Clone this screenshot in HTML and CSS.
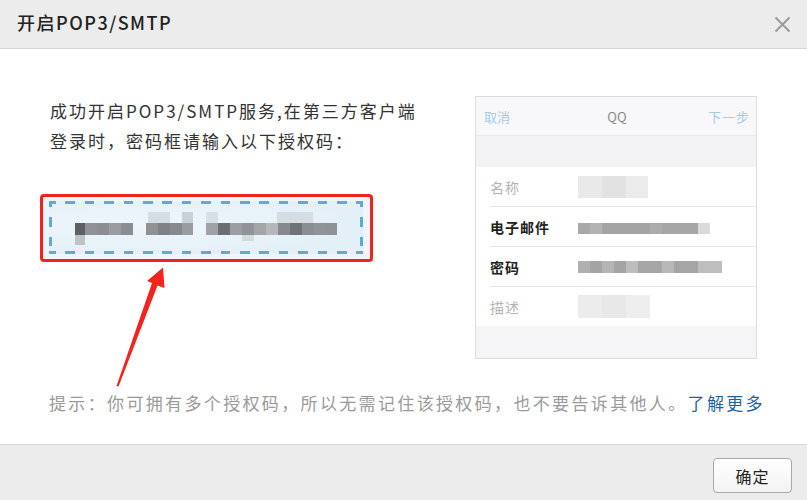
FILE: index.html
```html
<!DOCTYPE html>
<html lang="zh-CN">
<head>
<meta charset="utf-8">
<title>开启POP3/SMTP</title>
<link rel="stylesheet" href="styles.css">
</head>
<body>
<div class="dialog">
  <header class="hd">
    <h1 class="title">开启POP3/SMTP</h1>
    <span class="close" aria-label="关闭">
      <svg width="17" height="17" viewBox="0 0 17 17"><path d="M1.5 1.5 L15.5 15.5 M15.5 1.5 L1.5 15.5" stroke="#9a9a9a" stroke-width="2" fill="none"/></svg>
    </span>
  </header>
  <main class="bd">
    <div class="top">
      <div class="left">
        <p class="intro">成功开启POP3/SMTP服务,在第三方客户端<br>登录时，密码框请输入以下授权码：</p>
        <div class="codebox">
          <div class="dash">
            <div class="code">
              <span class="seg s1"></span>
              <span class="seg s2"></span>
              <span class="seg s3"></span>
            </div>
          </div>
        </div>
      </div>
      <div class="phone">
        <div class="nav"><span class="cancel">取消</span><span class="qq">QQ</span><span class="next">下一步</span></div>
        <div class="band"></div>
        <div class="row"><span class="lbl muted">名称</span><span class="val v-name"></span></div>
        <div class="row"><span class="lbl strong">电子邮件</span><span class="val v-mail"></span></div>
        <div class="row"><span class="lbl strong">密码</span><span class="val v-pwd"></span></div>
        <div class="row last"><span class="lbl muted">描述</span><span class="val v-desc"></span></div>
        <div class="band band-bottom"></div>
      </div>
    </div>
    <p class="hint">提示：你可拥有多个授权码，所以无需记住该授权码，也不要告诉其他人。<a class="more">了解更多</a></p>
  </main>
  <footer class="ft"><button class="ok">确定</button></footer>
  <svg class="arrow" width="807" height="500" viewBox="0 0 807 500">
    <polygon points="116.5,386 152,283 147,281 163,267.5 164.5,288 157.5,285.5 118.5,386.5" fill="#f4231b"/>
  </svg>
</div>
</body>
</html>
```
FILE: styles.css
```css
body {
  margin: 0;
  background: #fff;
  font-family: "Noto Sans CJK SC", "Noto Sans", sans-serif;
}

.dialog {
  position: relative;
  width: 807px;
  height: 500px;
  display: flex;
  flex-direction: column;
  overflow: hidden;
  background: #fff;
}

/* header */
.hd {
  flex: none;
  height: 44px;
  padding: 0 17px 4px 17px;
  background: #ececec;
  border-bottom: 1px solid #d4d4d4;
  display: flex;
  align-items: center;
  justify-content: space-between;
}
.title {
  margin: 0;
  font-size: 18px;
  font-weight: 500;
  color: #222;
  letter-spacing: 1.5px;
}
.close {
  display: flex;
  width: 17px;
  height: 17px;
  margin-top: 4px;
  margin-right: -1px;
}

/* body */
.bd {
  flex: 1;
  padding: 47px 0 0 40px;
}
.top {
  display: flex;
}
.left {
  width: 435px;
}
.intro {
  margin: 0 0 0 10px;
  font-size: 17px;
  line-height: 30px;
  letter-spacing: 2px;
  color: #333;
}
.codebox {
  margin-top: 38px;
  width: 333px;
  height: 68px;
  box-sizing: border-box;
  border: 3px solid #f3231b;
  border-radius: 4px;
  padding: 4px 7px 5px 6px;
  background: #eef6fb;
}
.dash {
  width: 314px;
  height: 53px;
  box-sizing: border-box;
  padding-top: 11px;
  background:
    repeating-linear-gradient(to right, #5fabd8 0 9.5px, transparent 9.5px 19.4px) -3px 0 / calc(100% + 3px) 3px no-repeat,
    repeating-linear-gradient(to right, #5fabd8 0 9.5px, transparent 9.5px 19.4px) -3px 100% / calc(100% + 3px) 3px no-repeat,
    repeating-linear-gradient(to bottom, #5fabd8 0 9.5px, transparent 9.5px 19.4px) 0 -3px / 3px calc(100% + 3px) no-repeat,
    repeating-linear-gradient(to bottom, #5fabd8 0 9.5px, transparent 9.5px 19.4px) 100% -3px / 3px calc(100% + 3px) no-repeat,
    radial-gradient(ellipse at 30% 45%, #eef6fb 0, #e4f0f8 70%);
}
.code {
  display: flex;
  gap: 13px;
  padding-left: 26px;
  align-items: flex-start;
}
.seg {
  display: block;
  height: 34px;
}
.s1 {
  width: 58px;
  background:
    linear-gradient(#bfc3c6, #bfc3c6) 0 23px / 10px 10px no-repeat,
    linear-gradient(to right, #5c6064 0 10px, #8f9296 10px 22px, #8b8e92 22px 34px, #9a9da0 34px 46px, #8a8d91 46px 58px) 0 11px / 100% 12px no-repeat;
}
.s2 {
  width: 47px;
  background:
    linear-gradient(to right, transparent 0 2px, #d6dde2 2px 24px, transparent 24px 36px, #c9d1d7 36px 47px) 0 0 / 100% 11px no-repeat,
    linear-gradient(to right, #8f9295 0 12px, #7e8185 12px 24px, #86898d 24px 36px, #9a9da0 36px 47px) 0 11px / 100% 12px no-repeat;
}
.s3 {
  width: 131px;
  background:
    linear-gradient(to right, #d8e0e5 0 12px, transparent 12px 71px, #d5dde2 71px 107px, transparent 107px) 0 0 / 100% 11px no-repeat,
    linear-gradient(to right, transparent 0 36px, #d3dbe0 36px 48px, transparent 48px) 0 23px / 100% 6px no-repeat,
    linear-gradient(to right, #a0a3a6 0 12px, #6b6e72 12px 24px, #9c9fa2 24px 36px, #909397 36px 48px, #a3a6a9 48px 60px, #b5b8bb 60px 72px, #86898d 72px 84px, #6f7276 84px 96px, #8a8d91 96px 108px, #909397 108px 120px, #8e9195 120px 131px) 0 11px / 100% 12px no-repeat;
}

/* phone mockup */
.phone {
  width: 282px;
  height: 263px;
  box-sizing: border-box;
  border: 1px solid #dcdcdc;
  background: #fff;
  display: flex;
  flex-direction: column;
}
.nav {
  height: 38px;
  flex: none;
  border-bottom: 1px solid #e9e9ec;
  background: #f8f8fa;
  display: grid;
  grid-template-columns: 1fr auto 1fr;
  align-items: center;
  padding: 0 6px 0 8px;
  font-size: 13px;
}
.cancel { color: #a6cbe8; }
.qq { color: #8a8a8a; text-align: center; }
.next { color: #a6cbe8; text-align: right; letter-spacing: 1px; }
.band {
  height: 31px;
  flex: none;
  background: #f3f3f6;
}
.band-bottom {
  height: 32px;
  background: #f5f5f7;
}
.row {
  height: 39px;
  flex: none;
  margin-left: 14px;
  border-bottom: 1px solid #e7e7e7;
  display: flex;
  align-items: center;
}
.row.last {
  height: 39px;
  border-bottom: 0;
}
.lbl {
  width: 88px;
  font-size: 14px;
  letter-spacing: 1px;
}
.muted { color: #b3b3b3; }
.strong { color: #222; font-weight: 700; }
.val { display: block; }
.v-name {
  width: 70px;
  height: 22px;
  background: linear-gradient(to right, #e9e9e9 0 24px, #e2e2e2 24px 48px, #ebebeb 48px);
}
.v-mail {
  width: 132px;
  height: 11px;
  margin-top: 4px;
  background: linear-gradient(to right, #a9a9a9 0 12px, #b3b3b3 12px 24px, #a4a4a4 24px 72px, #acacac 72px 84px, #a6a6a6 84px 120px, #dadada 120px 132px);
}
.v-pwd {
  width: 144px;
  height: 12px;
  background: linear-gradient(to right, #b0b0b0 0 12px, #a4a4a4 12px 24px, #b4b4b4 24px 36px, #a4a4a4 36px 48px, #bdbdbd 48px 60px, #a6a6a6 60px 84px, #b8b8b8 84px 96px, #a5a5a5 96px 120px, #bebebe 120px 144px);
}
.v-desc {
  width: 72px;
  height: 23px;
  background: linear-gradient(to right, #ececec 0 24px, #e8e8e8 24px 48px, #eeeeee 48px);
}

/* hint */
.hint {
  margin: 32px 0 0 9px;
  font-size: 17px;
  line-height: 24px;
  letter-spacing: 2.35px;
  color: #9a9a9a;
  white-space: nowrap;
}
.more {
  color: #1f5f9e;
}

/* footer */
.ft {
  flex: none;
  height: 56px;
  box-sizing: border-box;
  border-top: 1px solid #d4d4d4;
  background: #ececec;
  display: flex;
  justify-content: flex-end;
  align-items: flex-start;
  padding: 13px 15px 0 0;
}
.ok {
  width: 79px;
  height: 35px;
  padding: 0;
  border: 1px solid #a9a9a9;
  border-radius: 4px;
  background: linear-gradient(#ffffff, #f3f3f3);
  font-family: inherit;
  font-size: 16px;
  letter-spacing: 1px;
  color: #222;
}

/* annotation arrow overlay */
.arrow {
  position: absolute;
  left: 0;
  top: 0;
  pointer-events: none;
}
```
